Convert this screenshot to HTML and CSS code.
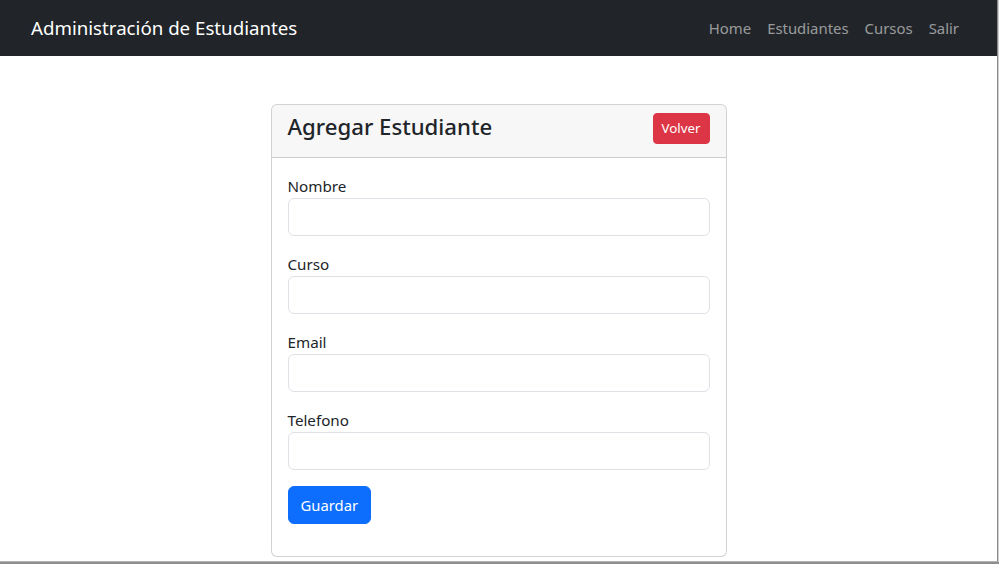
FILE: index.html
```html
<!DOCTYPE html>
<html lang="es">
<head>
<meta charset="utf-8">
<title>Administración de Estudiantes</title>
<link rel="stylesheet" href="styles.css">
</head>
<body>
<div class="window">
  <nav class="navbar">
    <a class="brand" href="#">Administración de Estudiantes</a>
    <ul class="nav">
      <li><a href="#">Home</a></li>
      <li><a href="#">Estudiantes</a></li>
      <li><a href="#">Cursos</a></li>
      <li><a href="#">Salir</a></li>
    </ul>
  </nav>
  <main class="main">
    <div class="card">
      <div class="card-header">
        <h3 class="card-title">Agregar Estudiante</h3>
        <a class="btn btn-danger btn-sm" href="#">Volver</a>
      </div>
      <div class="card-body">
        <form>
          <div class="field">
            <label for="nombre">Nombre</label>
            <input id="nombre" class="input" type="text">
          </div>
          <div class="field">
            <label for="curso">Curso</label>
            <input id="curso" class="input" type="text">
          </div>
          <div class="field">
            <label for="email">Email</label>
            <input id="email" class="input" type="text">
          </div>
          <div class="field">
            <label for="telefono">Telefono</label>
            <input id="telefono" class="input" type="text">
          </div>
          <div class="field">
            <button class="btn btn-primary" type="button">Guardar</button>
          </div>
        </form>
      </div>
    </div>
  </main>
</div>
<div class="desktop"></div>
</body>
</html>
```
FILE: styles.css
```css
* { box-sizing: border-box; }
html, body { margin: 0; padding: 0; }
body {
  font-family: "Noto Sans", "Open Sans", sans-serif;
  font-size: 16px;
  line-height: 1.5;
  color: #212529;
  background: #cfcfcf;
  width: 999px;
  height: 564px;
  overflow: hidden;
}
.window {
  width: 998px;
  height: 562px;
  background: #fff;
  border-right: 1px solid #8a8a8a;
  border-bottom: 1px solid #b5b5b5;
  overflow: hidden;
}
.desktop {
  height: 2px;
  background: #8e8e8e;
}
.navbar {
  height: 56px;
  background: #212529;
  display: flex;
  align-items: center;
  justify-content: space-between;
  padding: 0 30px 0 31px;
}
.brand {
  color: #fff;
  text-decoration: none;
  font-size: 18.7px;
  line-height: 30px;
}
.nav {
  list-style: none;
  display: flex;
  margin: 0;
  padding: 0;
}
.nav a {
  display: block;
  padding: 8px 8px;
  color: rgba(255, 255, 255, 0.55);
  text-decoration: none;
  font-size: 14.9px;
}
.main {
  padding-top: 48px;
}
.card {
  width: 456px;
  margin: 0 auto;
  border: 1px solid rgba(0, 0, 0, 0.175);
  border-radius: 6px;
  background: #fff;
}
.card-header {
  display: flex;
  justify-content: space-between;
  align-items: flex-start;
  padding: 8px 16px;
  background: rgba(0, 0, 0, 0.03);
  border-bottom: 1px solid rgba(0, 0, 0, 0.175);
  border-radius: 5px 5px 0 0;
}
.card-title {
  margin: 0 0 8px;
  font-size: 22.2px;
  font-weight: 500;
  line-height: 28px;
}
.card-body {
  padding: 16px;
}
.field {
  margin-bottom: 16px;
}
.field label {
  display: block;
  font-size: 15.2px;
  line-height: 24px;
}
.input {
  display: block;
  width: 100%;
  height: 38px;
  padding: 6px 12px;
  border: 1px solid #dee2e6;
  border-radius: 6px;
  font: inherit;
  background: #fff;
}
.btn {
  display: inline-block;
  border: 1px solid transparent;
  color: #fff;
  text-decoration: none;
  font-family: inherit;
  cursor: pointer;
}
.btn-primary {
  background: #0d6efd;
  border-color: #0d6efd;
  padding: 6px 12px;
  font-size: 14.8px;
  line-height: 24px;
  border-radius: 6px;
  height: 38px;
}
.btn-danger {
  background: #dc3545;
  border-color: #dc3545;
}
.btn-sm {
  padding: 4px 8px;
  font-size: 13.3px;
  line-height: 21px;
  border-radius: 4px;
  height: 31px;
}
```
